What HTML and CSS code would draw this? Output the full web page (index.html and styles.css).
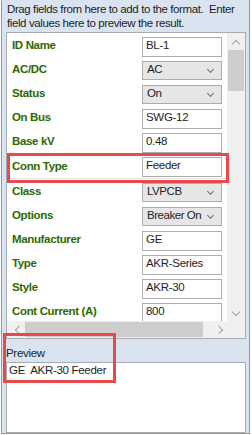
FILE: index.html
```html
<!DOCTYPE html>
<html lang="en">
<head>
<meta charset="utf-8"/>
<title>Format fields</title>
<link rel="stylesheet" href="styles.css">
</head>
<body>
<div class="frame">
  <p class="hint">Drag fields from here to add to the format.&nbsp; Enter<br>field values here to preview the result.</p>

  <div class="grid">
    <div class="grid-body">
      <div class="rows">
        <div class="row"><label>ID Name</label><div class="field">BL-1</div></div>
        <div class="row"><label>AC/DC</label><div class="combo">AC<span class="chev"></span></div></div>
        <div class="row"><label>Status</label><div class="combo">On<span class="chev"></span></div></div>
        <div class="row"><label>On Bus</label><div class="field">SWG-12</div></div>
        <div class="row"><label>Base kV</label><div class="field">0.48</div></div>
        <div class="row selected"><label>Conn Type</label><div class="field">Feeder</div></div>
        <div class="row"><label>Class</label><div class="combo">LVPCB<span class="chev"></span></div></div>
        <div class="row"><label>Options</label><div class="combo">Breaker On<span class="chev"></span></div></div>
        <div class="row"><label>Manufacturer</label><div class="field">GE</div></div>
        <div class="row"><label>Type</label><div class="field">AKR-Series</div></div>
        <div class="row"><label>Style</label><div class="field">AKR-30</div></div>
        <div class="row"><label>Cont Current (A)</label><div class="field">800</div></div>
      </div>
      <div class="vscroll">
        <span class="arrow up"></span>
        <div class="vthumb"></div>
        <span class="arrow down"></span>
      </div>
    </div>
    <div class="hscroll">
      <span class="arrow left"></span>
      <div class="hthumb"></div>
      <span class="arrow right"></span>
    </div>
  </div>

  <div class="preview-label">Preview</div>
  <div class="preview-box">GE&nbsp; AKR-30 Feeder</div>

  <div class="mark mark-conn"></div>
  <div class="mark mark-preview"></div>
</div>
</body>
</html>
```

FILE: styles.css
```css
body {
    margin: 0;
    font-family: "Liberation Sans", Arial, sans-serif;
    font-size: 11.5px;
    letter-spacing: -0.3px;
    color: #1e1e1e;
}
.frame {
    position: relative;
    width: 249px;
    height: 434px;
    margin-left: 1px;
    background-color: #dae4f1;
    border: 1px solid #8e99a6;
    border-top: none;
    box-sizing: border-box;
    display: flex;
    flex-direction: column;
    padding: 0 3px 0 4px;
}
.hint {
    margin: 2px 0 0 1px;
    line-height: 14px;
    white-space: nowrap;
    letter-spacing: -0.4px;
}
.grid {
    margin-top: 2px;
    height: 305px;
    background: #fff;
    border: 1px solid #a5acb5;
    display: flex;
    flex-direction: column;
}
.grid-body {
    flex: 1;
    display: flex;
    overflow: hidden;
}
.rows {
    flex: 1;
}
.row {
    height: 24px;
    display: flex;
    align-items: center;
    padding-left: 5px;
}
.row label {
    flex: 1;
    font-weight: bold;
    color: #2c6a00;
    letter-spacing: -0.35px;
}
.row.selected {
    border-bottom: 1px solid #e2e2e2;
    height: 25px;
}
.field, .combo {
    width: 80px;
    height: 20px;
    box-sizing: border-box;
    margin: 3px 5px 0 0;
    padding: 0 3px;
    line-height: 15px;
    white-space: nowrap;
    overflow: hidden;
}
.field {
    border: 1px solid #abadb3;
    background: #fff;
}
.combo {
    position: relative;
    height: 19px;
    border: 1px solid #acacac;
    background: #e6e6e6;
    padding-left: 4px;
    letter-spacing: -0.45px;
}
.chev {
    position: absolute;
    right: 8px;
    top: 5px;
    width: 4px;
    height: 4px;
    border-right: 1px solid #6e6e6e;
    border-bottom: 1px solid #6e6e6e;
    transform: rotate(45deg);
}
.vscroll {
    width: 18px;
    background: #f0f0f0;
    position: relative;
}
.vthumb {
    position: absolute;
    left: 1px;
    right: 1px;
    top: 17px;
    height: 41px;
    background: #cdcdcd;
}
.hscroll {
    height: 17px;
    background: #f0f0f0;
    position: relative;
}
.hthumb {
    position: absolute;
    left: 18px;
    width: 178px;
    top: 1px;
    bottom: 1px;
    background: #cdcdcd;
}
.arrow {
    position: absolute;
    width: 5px;
    height: 5px;
    border-left: 1px solid #a3a3a3;
    border-top: 1px solid #a3a3a3;
}
.arrow.up { left: 6px; top: 8px; transform: rotate(45deg); }
.arrow.down { left: 6px; bottom: 6px; transform: rotate(225deg); }
.arrow.left { left: 9px; top: 6px; transform: rotate(-45deg); }
.arrow.right { left: 209px; top: 6px; transform: rotate(135deg); }
.preview-label {
    margin: 7px 0 0 0;
    line-height: 14px;
}
.preview-box {
    margin-top: 2px;
    height: 70px;
    background: #fff;
    border: 1px solid #a5acb5;
    padding: 0 2px;
    line-height: 14px;
}
.mark {
    position: absolute;
    border: 3px solid #e64a4a;
    box-sizing: border-box;
}
.mark-conn {
    left: 5px;
    top: 153px;
    width: 222px;
    height: 30px;
}
.mark-preview {
    left: 1px;
    top: 333px;
    width: 113px;
    height: 50px;
}
```
